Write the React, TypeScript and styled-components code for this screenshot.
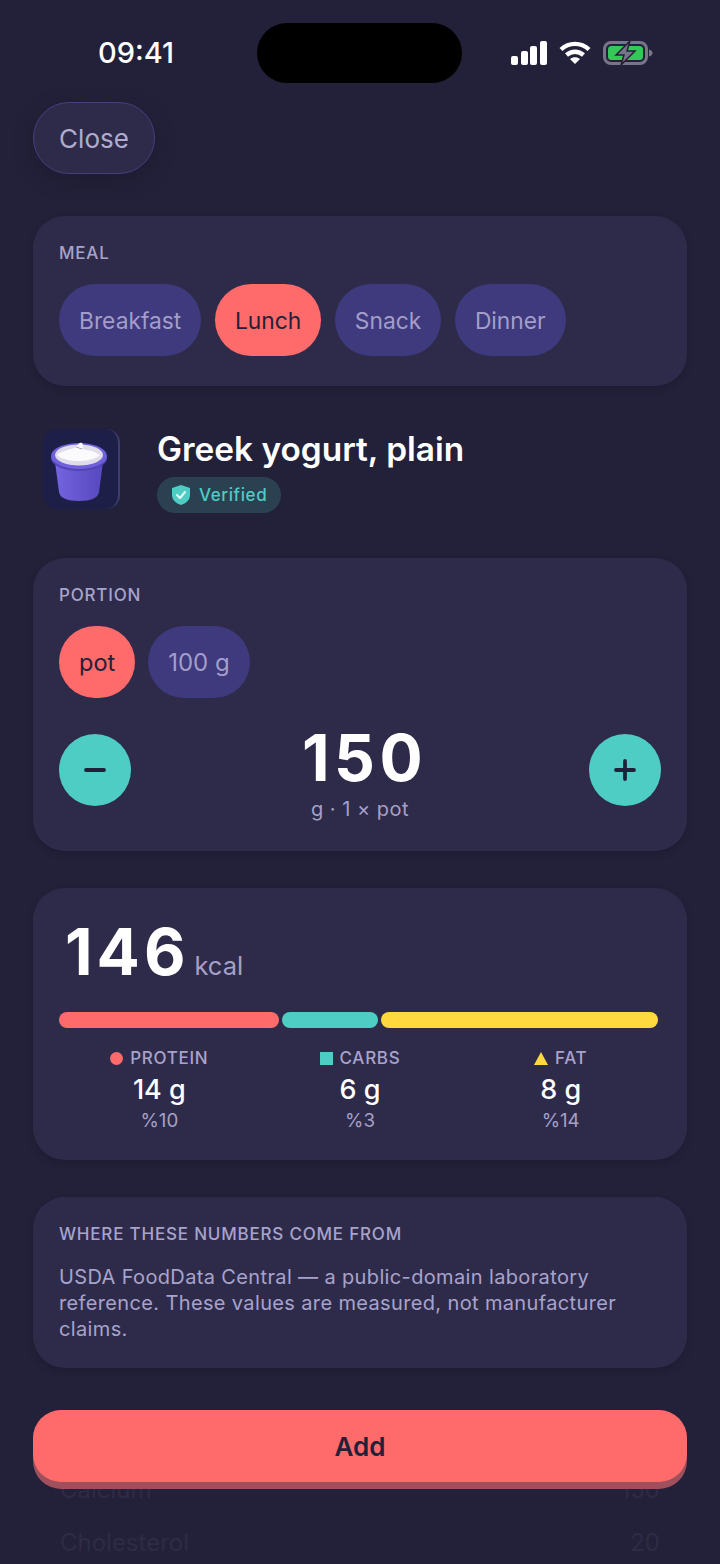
import styled, { createGlobalStyle } from "styled-components"

const GlobalStyle = createGlobalStyle`
  html, body {
    margin: 0;
    padding: 0;
    background: #232139;
  }
  * {
    box-sizing: border-box;
  }
`

const Screen = styled.div`
  position: relative;
  width: 720px;
  height: 1564px;
  overflow: hidden;
  background: #232139;
  font-family: "Inter", "Liberation Sans", sans-serif;
  color: #fff;
`

const StatusBar = styled.div`
  height: 102px;
  padding: 23px 67px 0 98px;
  display: flex;
  align-items: flex-start;
`

const Time = styled.div`
  width: 78px;
  margin-top: 14px;
  font-size: 29px;
  line-height: 32px;
  font-weight: 500;
  white-space: nowrap;
`

const Island = styled.div`
  width: 205px;
  height: 60px;
  margin-left: 81px;
  border-radius: 30px;
  background: #000;
`

const StatusIcons = styled.div`
  display: flex;
  align-items: center;
  gap: 12px;
  margin: 18px 0 0 auto;
`

const Content = styled.div`
  padding: 0 33px;
  display: flex;
  flex-direction: column;
  align-items: stretch;
`

const CloseButton = styled.button`
  align-self: flex-start;
  width: 122px;
  height: 72px;
  border-radius: 36px;
  border: 1.5px solid #453f80;
  background: #2e2b4a;
  color: #b0abd0;
  font: 400 26px "Inter", sans-serif;
  box-shadow: 0 6px 18px rgba(24, 22, 42, 0.5);
  margin-bottom: 42px;
`

const Card = styled.section<{ $height: number; $gap?: number }>`
  height: ${(p) => p.$height}px;
  margin-bottom: ${(p) => p.$gap ?? 37}px;
  padding: 26px 26px 0;
  border-radius: 32px;
  background: #2e2b4a;
  box-shadow: 0 3px 6px rgba(24, 22, 42, 0.45);
`

const Label = styled.div`
  font-size: 17px;
  line-height: 22px;
  font-weight: 500;
  letter-spacing: 0.8px;
  color: #a8a3cc;
  text-transform: uppercase;
`

const PillRow = styled.div<{ $gap?: number }>`
  display: flex;
  gap: ${(p) => p.$gap ?? 13}px;
  margin-top: 20px;
`

const Pill = styled.div<{ $active?: boolean; $size?: number }>`
  height: 72px;
  padding: 0 20px;
  border-radius: 36px;
  display: flex;
  align-items: center;
  font-size: ${(p) => p.$size ?? 22.8}px;
  background: ${(p) => (p.$active ? "#ff6b6b" : "#3f397e")};
  color: ${(p) => (p.$active ? "#232139" : "#a39ec9")};
`

const FoodHeader = styled.div`
  display: flex;
  align-items: flex-start;
  gap: 37px;
  height: 135px;
  padding: 6px 0 0 10px;
`

const FoodThumb = styled.div`
  width: 77px;
  height: 80px;
  padding: 6px 4px 0 0;
  border-radius: 14px;
  background: #1e1f49;
  border-right: 2px solid #3c3f6c;
  display: flex;
  align-items: center;
  justify-content: center;
`

const FoodInfo = styled.div`
  display: flex;
  flex-direction: column;
  align-items: flex-start;
  gap: 7px;
  margin-top: -1px;
`

const FoodName = styled.h1`
  margin: 0;
  font-size: 33.4px;
  line-height: 42px;
  font-weight: 600;
`

const VerifiedBadge = styled.div`
  height: 36px;
  padding: 0 14px 0 15px;
  border-radius: 18px;
  display: flex;
  align-items: center;
  gap: 9px;
  background: #2b4151;
  color: #4ecdc4;
  font-size: 17px;
  font-weight: 500;
  letter-spacing: 0.6px;
`

const Stepper = styled.div`
  display: flex;
  align-items: flex-start;
  justify-content: space-between;
  margin-top: 36px;
`

const RoundButton = styled.button`
  width: 72px;
  height: 72px;
  padding: 0;
  border: none;
  border-radius: 50%;
  background: #4ecdc4;
  color: #232139;
  display: flex;
  align-items: center;
  justify-content: center;
`

const Amount = styled.div`
  display: flex;
  flex-direction: column;
  align-items: center;
  margin-top: -10px;
`

const AmountValue = styled.div`
  padding-left: 9px;
  font-size: 64px;
  line-height: 68px;
  font-weight: 700;
  letter-spacing: 4.5px;
`

const AmountUnit = styled.div`
  margin-top: 4px;
  font-size: 20px;
  line-height: 26px;
  letter-spacing: 0.5px;
  color: #a5a0c8;
`

const Energy = styled.div`
  display: flex;
  align-items: baseline;
  gap: 5px;
  padding-left: 6px;
  height: 78px;
`

const EnergyValue = styled.span`
  font-size: 64px;
  line-height: 76px;
  font-weight: 700;
  letter-spacing: 4px;
`

const EnergyUnit = styled.span`
  font-size: 25.5px;
  color: #a5a0c8;
`

const MacroBar = styled.div`
  display: flex;
  gap: 3px;
  margin-top: 20px;
`

const MacroSegment = styled.div<{ $color: string; $width: number }>`
  width: ${(p) => p.$width}px;
  height: 16px;
  border-radius: 8px;
  background: ${(p) => p.$color};
`

const MacroGrid = styled.div`
  display: grid;
  grid-template-columns: repeat(3, 1fr);
  margin-top: 19px;
`

const Macro = styled.div`
  display: flex;
  flex-direction: column;
  align-items: center;
`

const MacroHead = styled.div`
  display: flex;
  align-items: center;
  gap: 7px;
  font-size: 17px;
  line-height: 22px;
  font-weight: 500;
  letter-spacing: 0.7px;
  color: #a8a3cc;
`

const Dot = styled.span`
  width: 13px;
  height: 13px;
  border-radius: 50%;
  background: #ff6b6b;
`

const Square = styled.span`
  width: 13px;
  height: 13px;
  background: #4ecdc4;
`

const Triangle = styled.span`
  width: 0;
  height: 0;
  border-left: 7px solid transparent;
  border-right: 7px solid transparent;
  border-bottom: 13px solid #ffd93d;
`

const MacroValue = styled.div`
  margin-top: 5px;
  font-size: 27px;
  line-height: 32px;
  font-weight: 550;
`

const MacroPercent = styled.div`
  margin-top: 2px;
  font-size: 18.7px;
  line-height: 26px;
  color: #a5a0c8;
`

const SourceText = styled.p`
  margin: 19px 0 0;
  font-size: 20px;
  line-height: 26px;
  letter-spacing: 0.36px;
  color: #a8a3cc;
`

const NutrientRow = styled.div`
  display: flex;
  justify-content: space-between;
  height: 53px;
  padding: 0 27px;
  font-size: 24px;
  line-height: 30px;
  color: #2d2b45;
`

const NutrientList = styled.div`
  margin-top: 107px;
`

const AddButton = styled.button`
  position: absolute;
  left: 33px;
  top: 1410px;
  width: 654px;
  height: 72px;
  border: none;
  border-radius: 28px;
  background: #ff6b6b;
  color: #232139;
  font: 600 26px "Inter", sans-serif;
  box-shadow: 0 7px 0 #a0505c;
`

function SignalIcon() {
  return (
    <svg width="36" height="24" viewBox="0 0 36 24" fill="#fff">
      <rect x="0" y="15" width="7" height="9" rx="2" />
      <rect x="10" y="10" width="7" height="14" rx="2" />
      <rect x="19" y="5" width="7" height="19" rx="2" />
      <rect x="29" y="0" width="7" height="24" rx="2" />
    </svg>
  )
}

function WifiIcon() {
  return (
    <svg width="32" height="24" viewBox="0 0 32 24" fill="none" stroke="#fff" strokeWidth="4.4">
      <path d="M2 8.5C10 1 22 1 30 8.5" />
      <path d="M7.5 14c5-4.4 12-4.4 17 0" />
      <path d="M16 23l-5-5c3-2.4 7-2.4 10 0z" fill="#fff" stroke="none" />
    </svg>
  )
}

function BatteryIcon() {
  return (
    <svg width="50" height="24" viewBox="0 0 50 24">
      <rect x="1.5" y="1.5" width="42" height="21" rx="6.5" fill="none" stroke="#77758a" strokeWidth="3" />
      <rect x="5" y="5" width="35" height="14" rx="3.5" fill="#34c759" />
      <path d="M46 8.5c2 .4 3.5 1.8 3.5 3.5s-1.5 3.1-3.5 3.5z" fill="#77758a" />
      <path d="M27 0L13 14h8l-3 10 14-14h-8z" fill="#77758a" stroke="#232139" strokeWidth="1.5" />
    </svg>
  )
}

function YogurtIcon() {
  return (
    <svg width="60" height="60" viewBox="0 0 60 60">
      <defs>
        <linearGradient id="cup" x1="0" y1="0" x2="1" y2="0">
          <stop offset="0" stopColor="#7464e0" />
          <stop offset="1" stopColor="#5648bd" />
        </linearGradient>
      </defs>
      <path d="M6 20l4 30c1 6 8 9 20 9s19-3 20-9l4-30z" fill="url(#cup)" />
      <ellipse cx="30" cy="16" rx="28" ry="13" fill="#5144b4" />
      <ellipse cx="30" cy="14" rx="28" ry="13" fill="#7060de" />
      <ellipse cx="30" cy="13" rx="24" ry="10.500" fill="#dfdee8" />
      <path d="M8 13c6-5 14-5 19-8 2-3 4-5 6-4 2 2 1 4 0 6 5 1 13 2 18 6-9 8-33 8-43 0z" fill="#fbfbfd" />
      <path d="M27 5c2 1 4 1 6 2" fill="none" stroke="#a9a7b8" strokeWidth="1" />
    </svg>
  )
}

function ShieldIcon() {
  return (
    <svg width="18" height="20" viewBox="0 0 18 20">
      <path d="M9 0l9 3v7c0 5-4 8.5-9 10-5-1.5-9-5-9-10V3z" fill="#4ecdc4" />
      <path d="M5 10l3 3 5-6" fill="none" stroke="#e8fbf9" strokeWidth="2" strokeLinecap="round" strokeLinejoin="round" />
    </svg>
  )
}

function StepIcon({ plus }: { plus?: boolean }) {
  return (
    <svg width="24" height="24" viewBox="0 0 24 24" fill="none" stroke="currentColor" strokeWidth="3.8" strokeLinecap="round">
      <path d="M3 12h18" />
      {plus && <path d="M12 3v18" />}
    </svg>
  )
}

export default function App() {
  return (
    <Screen>
      <GlobalStyle />
      <StatusBar>
        <Time>09:41</Time>
        <Island />
        <StatusIcons>
          <SignalIcon />
          <WifiIcon />
          <BatteryIcon />
        </StatusIcons>
      </StatusBar>
      <Content>
        <CloseButton>Close</CloseButton>

        <Card $height={170}>
          <Label>Meal</Label>
          <PillRow $gap={13.6}>
            <Pill>Breakfast</Pill>
            <Pill $active>Lunch</Pill>
            <Pill>Snack</Pill>
            <Pill>Dinner</Pill>
          </PillRow>
        </Card>

        <FoodHeader>
          <FoodThumb>
            <YogurtIcon />
          </FoodThumb>
          <FoodInfo>
            <FoodName>Greek yogurt, plain</FoodName>
            <VerifiedBadge>
              <ShieldIcon />
              Verified
            </VerifiedBadge>
          </FoodInfo>
        </FoodHeader>

        <Card $height={293}>
          <Label>Portion</Label>
          <PillRow>
            <Pill $active $size={23.5}>pot</Pill>
            <Pill $size={24}>100 g</Pill>
          </PillRow>
          <Stepper>
            <RoundButton>
              <StepIcon />
            </RoundButton>
            <Amount>
              <AmountValue>150</AmountValue>
              <AmountUnit>g · 1 × pot</AmountUnit>
            </Amount>
            <RoundButton>
              <StepIcon plus />
            </RoundButton>
          </Stepper>
        </Card>

        <Card $height={272}>
          <Energy>
            <EnergyValue>146</EnergyValue>
            <EnergyUnit>kcal</EnergyUnit>
          </Energy>
          <MacroBar>
            <MacroSegment $color="#ff6b6b" $width={220} />
            <MacroSegment $color="#4ecdc4" $width={96} />
            <MacroSegment $color="#ffd93d" $width={277} />
          </MacroBar>
          <MacroGrid>
            <Macro>
              <MacroHead>
                <Dot />
                PROTEIN
              </MacroHead>
              <MacroValue>14 g</MacroValue>
              <MacroPercent>%10</MacroPercent>
            </Macro>
            <Macro>
              <MacroHead>
                <Square />
                CARBS
              </MacroHead>
              <MacroValue>6 g</MacroValue>
              <MacroPercent>%3</MacroPercent>
            </Macro>
            <Macro>
              <MacroHead>
                <Triangle />
                FAT
              </MacroHead>
              <MacroValue>8 g</MacroValue>
              <MacroPercent>%14</MacroPercent>
            </Macro>
          </MacroGrid>
        </Card>

        <Card $height={171} $gap={0}>
          <Label>Where these numbers come from</Label>
          <SourceText>
            USDA FoodData Central — a public-domain laboratory reference. These values are measured, not manufacturer claims.
          </SourceText>
        </Card>

        <NutrientList>
          <NutrientRow>
            <span>Calcium</span>
            <span>150</span>
          </NutrientRow>
          <NutrientRow>
            <span>Cholesterol</span>
            <span>20</span>
          </NutrientRow>
        </NutrientList>
      </Content>
      <AddButton>Add</AddButton>
    </Screen>
  )
}
